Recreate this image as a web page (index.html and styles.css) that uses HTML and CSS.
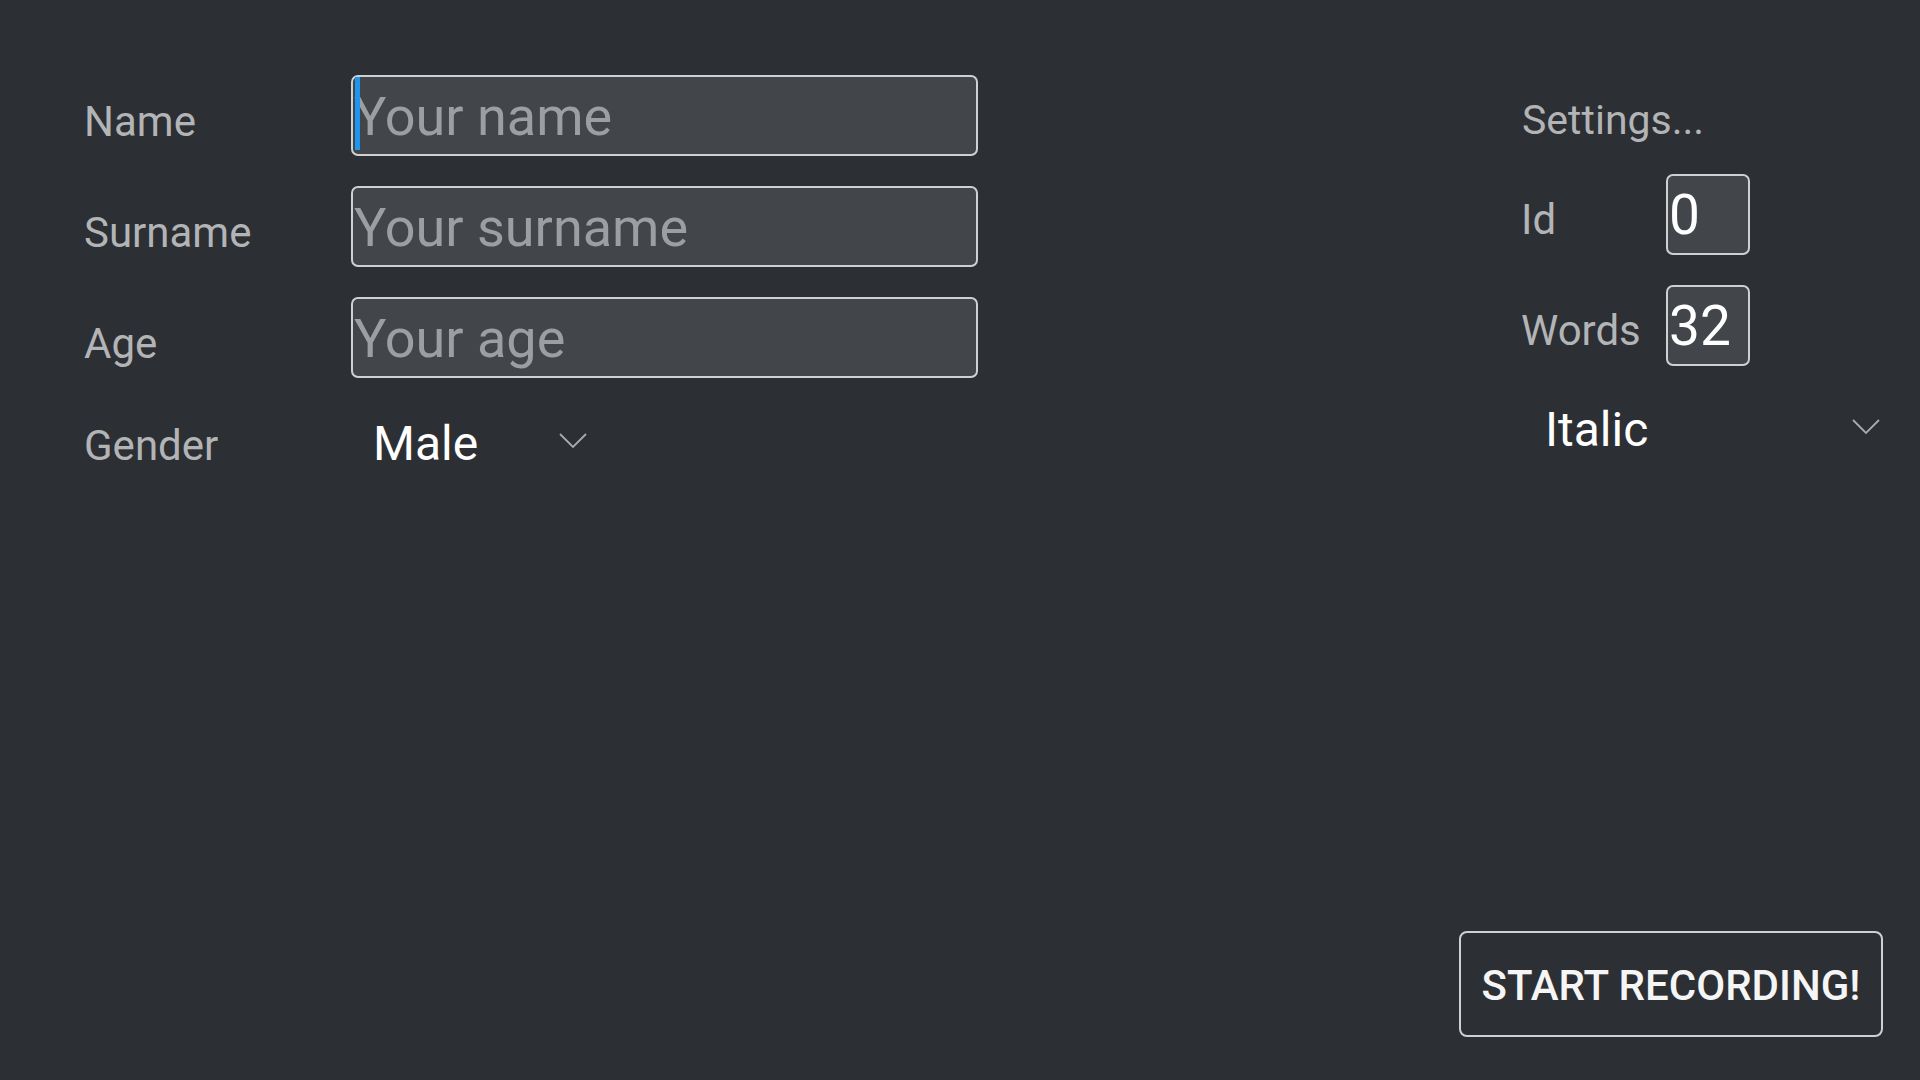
FILE: index.html
```html
<!DOCTYPE html>
<html lang="en">
<head>
<meta charset="utf-8">
<title>Recorder</title>
<link rel="stylesheet" href="styles.css">
</head>
<body>
<div class="app">
  <div class="top">
    <div class="form">
      <div class="label">Name</div>
      <div class="field field-wide"><span class="placeholder">Your name</span><span class="caret"></span></div>
      <div class="label">Surname</div>
      <div class="field field-wide"><span class="placeholder">Your surname</span></div>
      <div class="label">Age</div>
      <div class="field field-wide"><span class="placeholder">Your age</span></div>
      <div class="label label-gender">Gender</div>
      <div class="dropdown dropdown-gender">
        <span class="dropdown-text">Male</span>
        <svg class="chevron" width="28" height="16" viewBox="0 0 28 16"><polyline points="1,1 14,14 27,1" fill="none" stroke="#a9aaad" stroke-width="1.8"/></svg>
      </div>
    </div>
    <div class="side">
      <div class="side-title">Settings...</div>
      <div class="side-grid">
        <div class="label">Id</div>
        <div class="field field-small"><span class="value">0</span></div>
        <div class="label">Words</div>
        <div class="field field-small"><span class="value">32</span></div>
      </div>
      <div class="dropdown dropdown-style">
        <span class="dropdown-text">Italic</span>
        <svg class="chevron" width="28" height="16" viewBox="0 0 28 16"><polyline points="1,1 14,14 27,1" fill="none" stroke="#a9aaad" stroke-width="1.8"/></svg>
      </div>
    </div>
  </div>
  <div class="actions">
    <button class="record">START RECORDING!</button>
  </div>
</div>
</body>
</html>
```
FILE: styles.css
```css
html, body {
  margin: 0;
  padding: 0;
  background: #2c2f34;
}
body {
  font-family: Roboto, "Liberation Sans", sans-serif;
}
.app {
  display: flex;
  flex-direction: column;
  height: 1080px;
  box-sizing: border-box;
}
.top {
  display: flex;
  justify-content: space-between;
  align-items: flex-start;
}
.form {
  display: grid;
  grid-template-columns: 267px 627px;
  grid-auto-rows: auto;
  row-gap: 30px;
  padding: 75px 0 0 84px;
}
.label {
  font-size: 42px;
  line-height: normal;
  color: #b3b4b6;
  padding-top: 22px;
}
.label-gender {
  padding-top: 13px;
}
.field {
  position: relative;
  box-sizing: border-box;
  height: 81px;
  border: 2px solid #cfd0d1;
  border-radius: 7px;
  background: #42454a;
  padding: 7px 0 0 1px;
  font-size: 55px;
  line-height: normal;
  white-space: nowrap;
}
.field-wide {
  width: 627px;
  font-size: 54px;
  padding-top: 8px;
}
.field-small {
  width: 84px;
}
.placeholder {
  color: #9d9ea1;
}
.value {
  color: #ffffff;
}
.caret {
  position: absolute;
  left: 2px;
  top: 0;
  width: 5px;
  height: 73px;
  background: #1e96f0;
}
.dropdown {
  display: flex;
  align-items: center;
  justify-content: space-between;
  box-sizing: border-box;
  padding: 0 20px 0 22px;
}
.dropdown-text {
  font-size: 48px;
  line-height: normal;
  color: #ffffff;
}
.chevron {
  display: block;
  margin-bottom: 6px;
}
.dropdown-gender {
  width: 256px;
  padding-top: 7px;
}
.side {
  width: 379px;
  margin-right: 20px;
  padding-top: 96px;
}
.side-title {
  font-size: 41px;
  line-height: normal;
  color: #b3b4b6;
  margin-bottom: 30px;
  padding-left: 1px;
}
.side-grid {
  display: grid;
  grid-template-columns: 145px 84px;
  row-gap: 30px;
}
.side-grid .label {
  padding-top: 21px;
}
.dropdown-style {
  width: 379px;
  margin-top: 35px;
  padding-left: 24px;
}
.actions {
  margin-top: auto;
  display: flex;
  justify-content: flex-end;
  padding: 0 37px 43px 0;
}
.record {
  width: 424px;
  height: 106px;
  box-sizing: border-box;
  border: 2px solid #cfd0d1;
  border-radius: 8px;
  background: transparent;
  color: #f5f5f5;
  font-family: Roboto, "Liberation Sans", sans-serif;
  font-size: 42px;
  font-weight: 500;
  padding: 2px 0 0 0;
  cursor: pointer;
}
```
